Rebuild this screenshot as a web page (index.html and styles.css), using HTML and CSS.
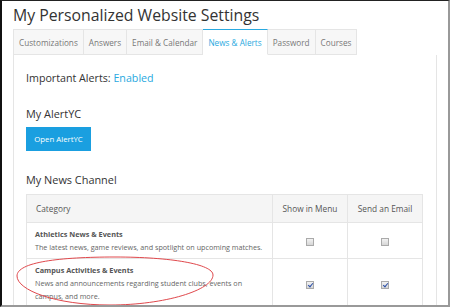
FILE: index.html
```html
<!DOCTYPE html>
<html lang="en">
<head>
  <meta charset="UTF-8">
  <title>My Personalized Website Settings</title>
  <link rel="stylesheet" href="styles.css">
</head>
<body>
  <div class="frame">
    <h1>My Personalized Website Settings</h1>

    <!-- Tabs -->
    <ul class="tabs">
      <li>Customizations</li>
      <li>Answers</li>
      <li>Email &amp; Calendar</li>
      <li class="active">News &amp; Alerts</li>
      <li>Password</li>
      <li>Courses</li>
    </ul>

    <div class="panel">
      <p class="alert-line">Important Alerts: <span class="enabled">Enabled</span></p>

      <h2>My AlertYC</h2>
      <button class="btn">Open AlertYC</button>

      <h2 class="news-title">My News Channel</h2>
      <table class="news">
        <thead>
          <tr>
            <th class="cat">Category</th>
            <th class="col">Show in Menu</th>
            <th class="col">Send an Email</th>
          </tr>
        </thead>
        <tbody>
          <tr>
            <td>
              <div class="item-title">Athletics News &amp; Events</div>
              <div class="item-desc">The latest news, game reviews, and spotlight on upcoming matches.</div>
            </td>
            <td class="box"><span class="check"></span></td>
            <td class="box"><span class="check"></span></td>
          </tr>
          <tr>
            <td>
              <div class="item-title">Campus Activities &amp; Events</div>
              <div class="item-desc">News and announcements regarding student clubs, events on campus, and more.</div>
            </td>
            <td class="box"><span class="check on"></span></td>
            <td class="box"><span class="check on"></span></td>
          </tr>
        </tbody>
      </table>
    </div>

    <!-- red hand-drawn annotation loop -->
    <svg class="mark" width="230" height="60" viewBox="0 250 230 60">
      <path d="M17,276 C17,262 60,257 115,257 C170,257 213,264 213,275 C213,290 165,305 110,305 C55,305 17,290 17,276 Z" fill="none" stroke="#e0484c" stroke-width="1"/>
    </svg>
  </div>
</body>
</html>
```

FILE: styles.css
```css
* {
  margin: 0;
  padding: 0;
  box-sizing: border-box;
}

body {
  font-family: 'Open Sans', sans-serif;
  background: #fff;
}

/* Screenshot frame */
.frame {
  position: relative;
  width: 450px;
  height: 307px;
  overflow: hidden;
  border-top: 1px solid #222;
  border-left: 2px solid #111;
  border-right: 2px solid #999;
  border-bottom: 2px solid #999;
  padding-left: 11px;
  padding-right: 11px;
}

h1 {
  font-size: 15.8px;
  font-weight: 400;
  color: #333;
  line-height: 24px;
  margin-top: 2px;
  margin-bottom: 2px;
}

/* Tabs */
.tabs {
  display: flex;
  list-style: none;
  height: 26px;
}

.tabs li {
  font-size: 8.2px;
  color: #777;
  background: #f7f7f7;
  border: 1px solid #e5e5e5;
  border-left: none;
  padding: 0 5px;
  line-height: 25px;
}

.tabs li:first-child {
  border-left: 1px solid #e5e5e5;
}

.tabs li.active {
  background: #fff;
  color: #29a9e0;
  border-top: 1px solid #29a9e0;
  border-bottom-color: #fff;
}

/* Content panel */
.panel {
  border: 1px solid #e5e5e5;
  border-top: none;
  height: 260px;
  padding: 12px 12px 0;
}

.alert-line {
  font-size: 10.7px;
  color: #333;
  line-height: 16px;
  margin-top: 3px;
}

.enabled {
  color: #29a9e0;
}

h2 {
  font-size: 10.9px;
  font-weight: 400;
  color: #333;
  line-height: 16px;
  margin-top: 20px;
}

.btn {
  display: block;
  margin-top: 5px;
  width: 65px;
  height: 24px;
  background: #1a9fe0;
  color: #fff;
  border: none;
  font-family: 'Open Sans', sans-serif;
  font-size: 7.8px;
}

.news-title {
  margin-top: 21px;
}

/* News table */
.news {
  margin-top: 6px;
  width: 397px;
  border-collapse: collapse;
}

.news th,
.news td {
  border: 1px solid #e5e5e5;
}

.news th {
  background: #f5f5f5;
  font-size: 8.3px;
  font-weight: 400;
  color: #555;
  height: 28px;
  text-align: left;
  padding: 0 9px;
}

.news th.col {
  width: 75px;
  text-align: center;
  padding: 0 4px;
}

.news td {
  padding: 5px 8px 4px;
  vertical-align: top;
}

.item-title {
  font-size: 7.3px;
  font-weight: 700;
  color: #555;
  line-height: 13px;
}

.item-desc {
  font-size: 7.2px;
  color: #666;
  line-height: 13px;
}

.news td.box {
  text-align: center;
  vertical-align: middle;
  padding: 0;
}

.check {
  display: inline-block;
  width: 8px;
  height: 8px;
  border: 1px solid #aaa;
  background: linear-gradient(#f2f2f2, #d6d6d6);
  position: relative;
  vertical-align: middle;
}

.check.on::after {
  content: "";
  position: absolute;
  left: 2px;
  top: 0;
  width: 2px;
  height: 4px;
  border-right: 1.5px solid #2b4fa8;
  border-bottom: 1.5px solid #2b4fa8;
  transform: rotate(40deg);
}

/* Annotation overlay, in frame coordinates */
.mark {
  position: absolute;
  left: -2px;
  top: 249px;
}
```
